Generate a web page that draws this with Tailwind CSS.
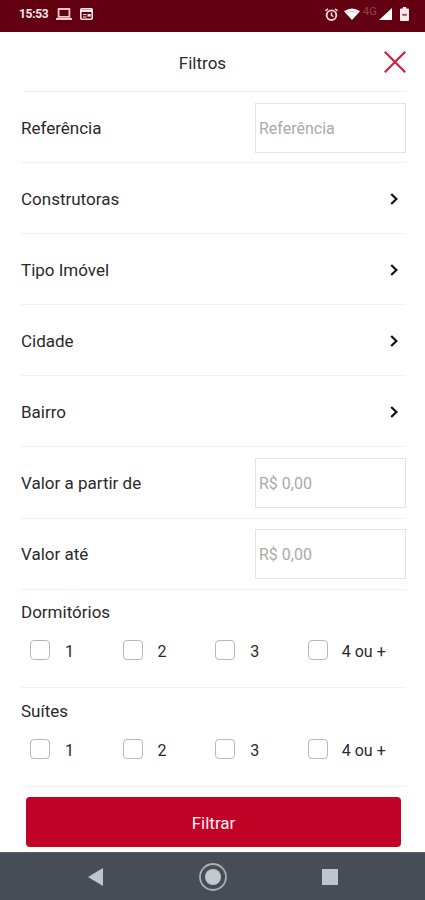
<!DOCTYPE html>
<html lang="pt-BR">
<head>
  <meta charset="UTF-8">
  <meta name="viewport" content="width=device-width, initial-scale=1.0">
  <title>Filtros</title>
  <script src="https://cdn.jsdelivr.net/npm/@tailwindcss/browser@4"></script>
</head>
<body class="bg-white">
  <div class="w-[425px] h-[900px] flex flex-col overflow-hidden bg-white font-['Roboto',sans-serif] text-[17px] leading-5 text-[#2a2a2a]">
    <!-- Status bar -->
    <div class="h-8 shrink-0 bg-[#620012] flex items-center justify-between pl-[19px] pr-[16px] pb-[4px] text-[#fbe6e8]">
      <div class="flex items-center">
        <span class="w-[30px] text-[12px] leading-4 font-bold tracking-[-0.3px]">15:53</span>
        <svg class="ml-[7px] w-4 h-3" viewBox="0 0 16 12" fill="none" stroke="#f3c5cd" stroke-width="1.8"><path d="M2.6 1h10.8v7.8H2.6zM0 11h16"/></svg>
        <svg class="ml-[8px] w-[13px] h-3" viewBox="0 0 13 12" fill="none" stroke="#fbe6e8" stroke-width="1.6"><rect x=".8" y=".8" width="11.4" height="10.4" rx="1"/><path d="M1 2.8h11" stroke-width="2.4"/><path d="M3 6.6h3.5M3 9h3.5" stroke-width="1"/><path d="M7.5 7.3h3.2" stroke-width="2.6"/></svg>
      </div>
      <div class="flex items-center">
        <svg class="w-[13px] h-[13px]" viewBox="0 0 13 13" fill="none" stroke="#f5d5da" stroke-width="1.9"><circle cx="6.5" cy="7.2" r="4.8"/><path d="M6.5 4.4v3l2 1.2M.5 2.8 3 .8M12.5 2.8 10 .8" stroke-width="1.5"/></svg>
        <svg class="ml-[6px] w-4 h-3" viewBox="0 0 16 12"><path d="M0 3.2Q8-2.2 16 3.2L8 12z" fill="#fff"/><path d="M3.4 4.6Q8 2 12.6 4.6" fill="none" stroke="#d9a5ad" stroke-width=".8"/></svg>
        <span class="ml-[3px] w-[15px] -mt-[4px] text-[11px] leading-3 text-[#92404d]">4G</span>
        <svg class="ml-[1px] w-[13px] h-3" viewBox="0 0 13 12" fill="#fff"><path d="M13 0v12H0z"/></svg>
        <svg class="ml-[8px] w-[9px] h-[14px]" viewBox="0 0 9 14"><path d="M2.8 0h3.4v1.6H8q1 0 1 1V13q0 1-1 1H1q-1 0-1-1V2.6q0-1 1-1h1.8z" fill="#fbeaec"/><path d="M2.2 7.8h4.6" stroke="#a0545f" stroke-width="2"/></svg>
      </div>
    </div>

    <!-- Header -->
    <div class="h-[60px] shrink-0 ml-[24px] mr-[19px] flex items-center border-b border-[#f1f1f1]">
      <h1 class="flex-1 pt-[2px] pr-[3px] text-center">Filtros</h1>
      <svg class="w-[22px] h-[22px]" viewBox="0 0 22 22" fill="none" stroke="#c62440" stroke-width="2.2"><path d="M.8.8 21.2 21.2M21.2.8.8 21.2"/></svg>
    </div>

    <!-- Filter rows -->
    <div class="shrink-0 pl-[21px] pr-[19px]">
      <label class="h-[71.1px] flex items-center justify-between border-b border-[#f1f1f1]">
        <span class="pt-[2px]">Referência</span>
        <input type="text" placeholder="Referência" class="mt-px w-[151px] h-[50px] px-[3px] pt-px border-[1.5px] border-[#e4e4e4] text-[16px] placeholder:text-[#aaa]">
      </label>
      <div class="h-[71.1px] flex items-center justify-between border-b border-[#f1f1f1]">
        <span class="pt-[2px]">Construtoras</span>
        <svg class="mr-[8px] mt-[2px] w-2 h-3" viewBox="0 0 8 12" fill="none" stroke="#111" stroke-width="2.2"><path d="M1.2 1 6.4 6 1.2 11"/></svg>
      </div>
      <div class="h-[71.1px] flex items-center justify-between border-b border-[#f1f1f1]">
        <span class="pt-[2px]">Tipo Imóvel</span>
        <svg class="mr-[8px] mt-[2px] w-2 h-3" viewBox="0 0 8 12" fill="none" stroke="#111" stroke-width="2.2"><path d="M1.2 1 6.4 6 1.2 11"/></svg>
      </div>
      <div class="h-[71.1px] flex items-center justify-between border-b border-[#f1f1f1]">
        <span class="pt-[2px]">Cidade</span>
        <svg class="mr-[8px] mt-[2px] w-2 h-3" viewBox="0 0 8 12" fill="none" stroke="#111" stroke-width="2.2"><path d="M1.2 1 6.4 6 1.2 11"/></svg>
      </div>
      <div class="h-[71.1px] flex items-center justify-between border-b border-[#f1f1f1]">
        <span class="pt-[2px]">Bairro</span>
        <svg class="mr-[8px] mt-[2px] w-2 h-3" viewBox="0 0 8 12" fill="none" stroke="#111" stroke-width="2.2"><path d="M1.2 1 6.4 6 1.2 11"/></svg>
      </div>
      <label class="h-[71.1px] flex items-center justify-between border-b border-[#f1f1f1]">
        <span class="pt-px">Valor a partir de</span>
        <input type="text" placeholder="R$ 0,00" class="mt-px w-[151px] h-[50px] px-[3px] border-[1.5px] border-[#e4e4e4] text-[16px] placeholder:text-[#aaa]">
      </label>
      <label class="h-[71.1px] flex items-center justify-between border-b border-[#f1f1f1]">
        <span class="pt-px">Valor até</span>
        <input type="text" placeholder="R$ 0,00" class="mt-px w-[151px] h-[50px] px-[3px] border-[1.5px] border-[#e4e4e4] text-[16px] placeholder:text-[#aaa]">
      </label>

      <!-- Checkbox groups -->
      <div class="h-[98.5px] pt-[12px] border-b border-[#f1f1f1]">
        <p>Dormitórios</p>
        <div class="mt-[17px] pl-[9px] grid grid-cols-[repeat(4,92.6px)] text-[16px]">
          <label class="flex items-center gap-[15px]"><input type="checkbox" class="appearance-none size-5 border-[1.5px] border-[#b8b8b8] rounded-[4px]"><span class="pt-[3px]">1</span></label>
          <label class="flex items-center gap-[15px]"><input type="checkbox" class="appearance-none size-5 border-[1.5px] border-[#b8b8b8] rounded-[4px]"><span class="pt-[3px]">2</span></label>
          <label class="flex items-center gap-[15px]"><input type="checkbox" class="appearance-none size-5 border-[1.5px] border-[#b8b8b8] rounded-[4px]"><span class="pt-[3px]">3</span></label>
          <label class="flex items-center gap-[14px]"><input type="checkbox" class="appearance-none size-5 border-[1.5px] border-[#b8b8b8] rounded-[4px]"><span class="pt-[3px] whitespace-nowrap">4 ou +</span></label>
        </div>
      </div>
      <div class="h-[98.5px] pt-[13px] border-b border-[#f1f1f1]">
        <p>Suítes</p>
        <div class="mt-[15px] pl-[9px] grid grid-cols-[repeat(4,92.6px)] text-[16px]">
          <label class="flex items-center gap-[15px]"><input type="checkbox" class="appearance-none size-5 border-[1.5px] border-[#b8b8b8] rounded-[4px]"><span class="pt-[5px]">1</span></label>
          <label class="flex items-center gap-[15px]"><input type="checkbox" class="appearance-none size-5 border-[1.5px] border-[#b8b8b8] rounded-[4px]"><span class="pt-[5px]">2</span></label>
          <label class="flex items-center gap-[15px]"><input type="checkbox" class="appearance-none size-5 border-[1.5px] border-[#b8b8b8] rounded-[4px]"><span class="pt-[5px]">3</span></label>
          <label class="flex items-center gap-[14px]"><input type="checkbox" class="appearance-none size-5 border-[1.5px] border-[#b8b8b8] rounded-[4px]"><span class="pt-[5px] whitespace-nowrap">4 ou +</span></label>
        </div>
      </div>
    </div>

    <div class="flex-1 pt-[10px] pl-[26px] pr-[24px]">
      <button type="button" class="w-full h-[50px] pt-[2px] pb-0 rounded-[4px] bg-[#c20328] text-[#fff0f1]">Filtrar</button>
    </div>

    <!-- Navigation bar -->
    <div class="h-12 shrink-0 bg-[#464d56] border-t border-[#59616a] flex items-center pl-[88px]">
      <svg class="w-[15px] h-[18px]" viewBox="0 0 15 18" fill="#bfc5ca"><path d="M15 0v18L0 9z"/></svg>
      <svg class="ml-[96px] w-7 h-7" viewBox="0 0 28 28"><circle cx="14" cy="14" r="13" fill="none" stroke="#a9afb5" stroke-width="1.8"/><circle cx="14" cy="14" r="8" fill="#c2c8cc"/></svg>
      <div class="ml-[95px] size-4 bg-[#bfc5ca]"></div>
    </div>
  </div>
</body>
</html>
